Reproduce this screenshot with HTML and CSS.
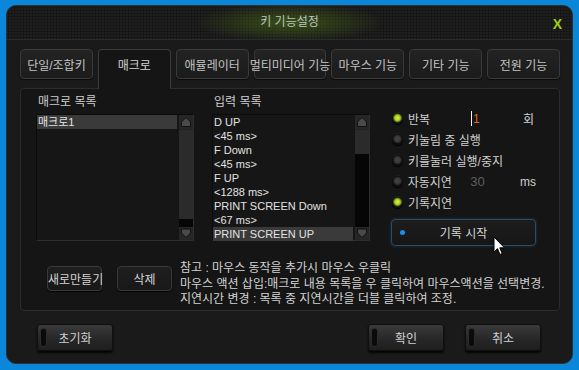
FILE: index.html
```html
<!DOCTYPE html>
<html lang="ko">
<head>
  <meta charset="UTF-8" />
  <title>키 기능설정</title>
  <link rel="stylesheet" href="styles.css">
</head>
<body>
  <div class="window">
    <div class="titlebar">
      <span></span>
      <span class="title">키 기능설정</span>
      <span class="close">X</span>
    </div>
    <div class="content">
      <div class="tabs">
        <div class="tab">단일/조합키</div>
        <div class="tab active">매크로</div>
        <div class="tab">애뮬레이터</div>
        <div class="tab">멀티미디어 기능</div>
        <div class="tab">마우스 기능</div>
        <div class="tab">기타 기능</div>
        <div class="tab">전원 기능</div>
      </div>

      <div class="panel">
        <div class="top">
          <div class="list-col">
            <div class="label">매크로 목록</div>
            <div class="listbox">
              <ul class="items">
                <li class="sel">매크로1</li>
              </ul>
              <div class="scrollbar">
                <div class="sb-btn"><svg width="14" height="14" viewBox="0 0 14 14"><polygon points="2.5,11.5 2.5,7 7,2.5 11.5,7 11.5,11.5" fill="#4a4a4a" stroke="#111" stroke-width="1"/></svg></div>
                <div class="sb-thumb" style="height:90px"></div>
                <div class="sb-track"></div>
                <div class="sb-btn"><svg width="14" height="13" viewBox="0 0 14 13"><polygon points="2.5,2 2.5,6 7,10.5 11.5,6 11.5,2" fill="#4a4a4a" stroke="#111" stroke-width="1"/></svg></div>
              </div>
            </div>
          </div>

          <div class="list-col">
            <div class="label">입력 목록</div>
            <div class="listbox">
              <ul class="items">
                <li>D UP</li>
                <li>&lt;45 ms&gt;</li>
                <li>F Down</li>
                <li>&lt;45 ms&gt;</li>
                <li>F UP</li>
                <li>&lt;1288 ms&gt;</li>
                <li>PRINT SCREEN Down</li>
                <li>&lt;67 ms&gt;</li>
                <li class="sel">PRINT SCREEN UP</li>
              </ul>
              <div class="scrollbar">
                <div class="sb-btn"><svg width="14" height="14" viewBox="0 0 14 14"><polygon points="2.5,11.5 2.5,7 7,2.5 11.5,7 11.5,11.5" fill="#4a4a4a" stroke="#111" stroke-width="1"/></svg></div>
                <div class="sb-thumb" style="height:25px"></div>
                <div class="sb-track"></div>
                <div class="sb-btn"><svg width="14" height="13" viewBox="0 0 14 13"><polygon points="2.5,2 2.5,6 7,10.5 11.5,6 11.5,2" fill="#4a4a4a" stroke="#111" stroke-width="1"/></svg></div>
              </div>
            </div>
          </div>

          <div class="options">
            <div class="opt">
              <span class="radio on"></span>
              <span class="opt-label">반복</span>
              <span class="opt-value"><span class="caret"></span><span class="typed">1</span></span>
              <span class="opt-unit">회</span>
            </div>
            <div class="opt">
              <span class="radio"></span>
              <span class="opt-label">키눌림 중 실행</span>
            </div>
            <div class="opt">
              <span class="radio"></span>
              <span class="opt-label">키를눌러 실행/중지</span>
            </div>
            <div class="opt">
              <span class="radio"></span>
              <span class="opt-label">자동지연</span>
              <span class="opt-value disabled">30</span>
              <span class="opt-unit">ms</span>
            </div>
            <div class="opt">
              <span class="radio on"></span>
              <span class="opt-label">기록지연</span>
            </div>
            <button class="record-btn">
              <span class="dot"></span>
              기록 시작
              <svg class="pointer" width="13" height="20" viewBox="0 0 13 20"><path d="M1 1 L1 16 L4.5 12.6 L7 18.5 L9.2 17.5 L6.8 11.8 L11.5 11.8 Z" fill="#fff" stroke="#000" stroke-width="1" stroke-linejoin="round"/></svg>
            </button>
          </div>
        </div>

        <div class="bottom">
          <button class="small-btn">새로만들기</button>
          <button class="small-btn">삭제</button>
          <div class="notes">
            <p>참고 : 마우스 동작을 추가시 마우스 우클릭</p>
            <p>마우스 액션 삽입:매크로 내용 목록을 우 클릭하여 마우스액션을 선택변경.</p>
            <p>지연시간 변경 : 목록 중 지연시간을 더블 클릭하여 조정.</p>
          </div>
        </div>
      </div>

      <div class="footer">
        <button class="big-btn">초기화</button>
        <button class="big-btn push">확인</button>
        <button class="big-btn">취소</button>
      </div>
    </div>
  </div>
</body>
</html>
```

FILE: styles.css
```css
* {
  box-sizing: border-box;
}
body {
  margin: 0;
  background: #0b87d9;
  font-family: "Liberation Sans", "Noto Sans CJK KR", sans-serif;
  font-size: 12px;
  color: #cfcfcf;
}
.window {
  margin: 5px 6px;
  width: 567px;
  height: 359px;
  background: #1a1a1a;
  border: 1px solid #2f2f2f;
  border-radius: 10px;
  overflow: hidden;
}
.titlebar {
  height: 34px;
  display: grid;
  grid-template-columns: 1fr auto 1fr;
  align-items: center;
  border-bottom: 1px solid #2b2b2b;
  background-color: #1f1f1f;
  background-image:
    radial-gradient(ellipse 95px 20px at 50% 50%, rgba(110, 165, 20, 0.38), rgba(110, 165, 20, 0) 100%),
    radial-gradient(circle, #141414 0.9px, rgba(0, 0, 0, 0) 1.3px);
  background-size: 100% 100%, 3px 3px;
}
.title {
  font-size: 12px;
  color: #b9c6bf;
  padding-bottom: 5px;
}
.close {
  justify-self: end;
  margin-right: 10px;
  color: #a4cc14;
  font-size: 14px;
  font-weight: bold;
  padding-top: 2px;
}
.content {
  padding: 9px 12px 0 13px;
}
.tabs {
  display: flex;
  gap: 5px;
  height: 30px;
  align-items: flex-start;
}
.tab {
  flex: 1 1 0;
  min-width: 0;
  height: 30px;
  display: flex;
  align-items: center;
  justify-content: center;
  white-space: nowrap;
  color: #c4c4c4;
  background: linear-gradient(#232323, #1b1b1b);
  border: 1px solid #3a3a3a;
  border-radius: 4px;
  box-shadow: 0 1px 1px #0a0a0a;
}
.tab.active {
  height: 40px;
  align-items: flex-start;
  padding-top: 6px;
  background: #151515;
  border-bottom: none;
  border-radius: 4px 4px 0 0;
  box-shadow: none;
  position: relative;
  z-index: 1;
  color: #d4d4d4;
}
.panel {
  margin-top: 9px;
  height: 223px;
  background: #151515;
  border: 1px solid #2c2c2c;
  border-radius: 4px;
  padding: 7px 0 0 15px;
}
.top {
  display: flex;
}
.list-col {
  width: 158px;
}
.list-col + .list-col {
  margin-left: 18px;
}
.label {
  line-height: 13px;
  margin-bottom: 5px;
  padding-left: 2px;
  color: #cdcdcd;
}
.listbox {
  height: 127px;
  display: flex;
  background: #161616;
  border: 1px solid #2e2e2e;
  border-top-color: #0b0b0b;
  border-left-color: #0b0b0b;
}
.items {
  list-style: none;
  margin: 0;
  padding: 0;
  flex: 1;
  font-size: 11px;
}
.items li {
  height: 14px;
  line-height: 14px;
  padding-left: 1px;
  color: #e2e2e2;
  white-space: nowrap;
}
.items li.sel {
  background: #3a3a3a;
  margin-right: 2px;
}
.scrollbar {
  width: 14px;
  display: flex;
  flex-direction: column;
  background: #060606;
}
.sb-btn {
  background: #262626;
  line-height: 0;
}
.sb-thumb {
  background: #2b2b2b;
  border-top: 1px solid #222;
}
.sb-track {
  flex: 1;
}
.options {
  margin-left: 21px;
  padding-top: 12px;
  width: 145px;
}
.opt {
  height: 21px;
  display: flex;
  align-items: center;
  white-space: nowrap;
}
.radio {
  width: 11px;
  height: 11px;
  margin-left: 1px;
  border-radius: 50%;
  background: radial-gradient(circle at 50% 45%, #444 0, #3a3a3a 2.5px, #2c2c2c 3.6px, #0e0e0e 4.6px);
  box-shadow: 0 1px 1px #000, 0 -1px 1px rgba(255, 255, 255, 0.05);
}
.radio.on {
  background: radial-gradient(circle at 50% 45%, #d8f448 0, #a6d01a 2.6px, #6f8c12 3.6px, #111 4.8px);
}
.opt-label {
  margin-left: 5px;
  width: 63px;
  color: #d0d0d0;
}
.opt-value {
  width: 52px;
  display: flex;
  align-items: center;
  color: #d0d0d0;
}
.opt-value.disabled {
  color: #5e5e5e;
  font-size: 13px;
  padding-left: 1px;
}
.caret {
  width: 1px;
  height: 15px;
  background: #f0f0f0;
}
.typed {
  color: #d86a1e;
  margin-left: 1px;
}
.opt-unit {
  color: #d0d0d0;
  font-size: 12px;
}
.record-btn {
  position: relative;
  margin-top: 6px;
  width: 145px;
  height: 27px;
  display: flex;
  align-items: center;
  justify-content: center;
  font: inherit;
  font-size: 12px;
  color: #d6d6d6;
  background: linear-gradient(#1d1d1d, #161616);
  border: 1px solid #2f4b63;
  border-radius: 4px;
  box-shadow: 0 0 3px rgba(30, 110, 170, 0.45);
  padding: 0;
}
.dot {
  position: absolute;
  left: 8px;
  top: 10px;
  width: 5px;
  height: 5px;
  border-radius: 50%;
  background: #1c90e8;
}
.pointer {
  position: absolute;
  left: 101px;
  top: 16px;
}
.bottom {
  display: flex;
  margin-top: 15px;
}
.small-btn {
  margin-top: 5px;
  width: 55px;
  height: 25px;
  padding: 0;
  font: inherit;
  white-space: nowrap;
  color: #d4d4d4;
  background: linear-gradient(#1f1f1f, #181818);
  border: 1px solid #393939;
  border-radius: 4px;
  box-shadow: 0 1px 1px #050505;
}
.small-btn:first-child {
  margin-left: 11px;
}
.small-btn + .small-btn {
  margin-left: 15px;
}
.notes {
  margin-left: 8px;
  color: #d2d2d2;
}
.notes p {
  margin: 0;
  line-height: 15.5px;
  white-space: nowrap;
}
.footer {
  display: flex;
  gap: 21px;
  margin-top: 13px;
  padding: 0 19px 0 17px;
}
.big-btn {
  position: relative;
  width: 76px;
  height: 27px;
  padding: 0;
  font: inherit;
  font-size: 12px;
  color: #cfcfcf;
  background: linear-gradient(#3a3a3a, #262626 60%, #1f1f1f);
  border: 1px solid #0f0f0f;
  border-radius: 3px;
  box-shadow: 0 2px 2px #050505;
}
.big-btn::before {
  content: "";
  position: absolute;
  left: 2px;
  top: 3px;
  bottom: 3px;
  width: 5px;
  border-radius: 3px;
  background: #0a0a0a;
  border: 1px solid #2c2c2c;
}
.push {
  margin-left: auto;
}
```
